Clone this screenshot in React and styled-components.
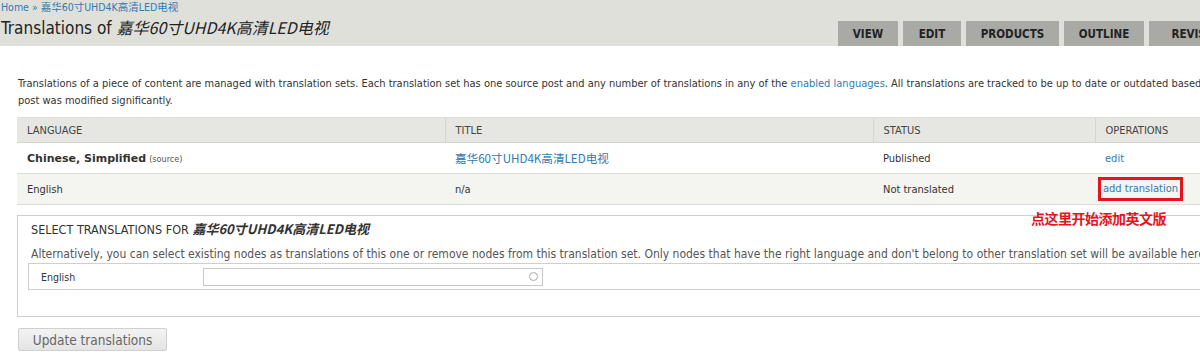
import React from "react";
import styled, { createGlobalStyle } from "styled-components";

const Global = createGlobalStyle`
  html, body { margin: 0; padding: 0; background: #fff; overflow: hidden; }
  body { font-family: "DejaVu Sans Condensed", "DejaVu Sans", "Noto Sans CJK SC", sans-serif; font-stretch: condensed; color: #333; }
`;

const Page = styled.div`
  width: 1200px;
  height: 352px;
  overflow: hidden;
  position: relative;
`;

const Header = styled.header`
  background: #e0e0db;
  height: 46px;
  padding: 1px 0 0 1px;
  box-sizing: border-box;
  display: flex;
  flex-direction: column;
  overflow: hidden;
`;

const Breadcrumb = styled.div`
  font-size: 10.5px;
  line-height: 12px;
  color: #2f7bb3;
  white-space: nowrap;
`;

const TitleRow = styled.div`
  display: flex;
  align-items: flex-end;
  justify-content: space-between;
  flex: 1;
  width: 1256px;
`;

const Title = styled.h1`
  margin: 0 0 7px 0;
  font-size: 17px;
  font-weight: normal;
  color: #222;
  white-space: nowrap;
  em { font-family: "Noto Sans CJK SC", "DejaVu Sans", sans-serif; font-style: italic; font-size: 16px; }
`;

const Tabs = styled.nav`
  display: flex;
  gap: 5px;
`;

const Tab = styled.span`
  display: flex;
  align-items: center;
  justify-content: center;
  width: ${(p) => p.$w}px;
  height: 25px;
  background: #a9a9a5;
  color: #222;
  font-weight: bold;
  font-size: 11.5px;
  flex-shrink: 0;
`;

const Content = styled.main`
  width: 1280px;
  padding: 0 0 0 17px;
  display: flex;
  flex-direction: column;
  align-items: flex-start;
`;

const Intro = styled.p`
  margin: 29px 0 8px 1px;
  font-size: 11px;
  line-height: 17px;
  color: #333;
  white-space: nowrap;
  a { color: #2f7bb3; text-decoration: none; }
`;

const Table = styled.table`
  border-collapse: collapse;
  width: 1260px;
  font-size: 11px;
  th, td { text-align: left; padding: 0 10px; }
  th {
    background: #e6e6e2;
    height: 24px;
    font-weight: normal;
    font-size: 11px;
    color: #444;
    text-transform: uppercase;
    border-left: 1px solid #d4d4d0;
    border-top: 1px solid #dededa;
    border-bottom: 1px solid #d4d4d0;
  }
  th:first-child { border-left: none; }
  td { height: 30px; color: #333; }
  tbody tr { border-bottom: 1px solid #dcdcd8; }
  tbody tr:nth-child(2) { background: #f4f4f1; }
`;

const Cell = styled.td`
  width: ${(p) => p.$w}px;
`;

const Strong = styled.b`
  font-family: "DejaVu Sans", sans-serif;
  font-stretch: normal;
  font-size: 11px;
`;

const Link = styled.a`
  color: #2f7bb3;
  text-decoration: none;
  font-size: ${(p) => (p.$big ? "11.6px" : "inherit")};
  font-family: ${(p) => (p.$cjk ? '"Noto Sans CJK SC", "DejaVu Sans", sans-serif' : "inherit")};
`;

const Source = styled.span`
  font-size: 9px;
  color: #555;
`;

const Highlight = styled.span`
  display: inline-block;
  border: 3px solid #e5141c;
  padding: 2px 2px 3px 2px;
  margin-left: -7px;
`;

const Annotation = styled.div`
  position: absolute;
  left: 1031px;
  top: 208px;
  color: #e5141c;
  font-family: "Noto Sans CJK SC", sans-serif;
  font-weight: bold;
  font-size: 14px;
  letter-spacing: -0.5px;
`;

const Fieldset = styled.section`
  margin-top: 10px;
  width: 1260px;
  height: 102px;
  box-sizing: border-box;
  border: 1px solid #cfcfcf;
  padding: 5px 0 0 13px;
`;

const Legend = styled.h2`
  margin: 0;
  font-size: 12.5px;
  line-height: 16px;
  font-weight: normal;
  text-transform: uppercase;
  color: #333;
  white-space: nowrap;
  em { font-family: "Noto Sans CJK SC", sans-serif; font-style: italic; font-weight: bold; font-size: 13px; }
`;

const FieldDesc = styled.p`
  margin: 9px 0 0 0;
  font-size: 12px;
  line-height: 15px;
  color: #555;
  white-space: nowrap;
`;

const FormRow = styled.div`
  margin: 1px 0 0 -3px;
  height: 27px;
  box-sizing: border-box;
  border: 1px solid #cfcfcf;
  display: flex;
  align-items: center;
  padding-left: 12px;
`;

const Label = styled.label`
  width: 162px;
  font-size: 10.5px;
  color: #333;
`;

const InputWrap = styled.div`
  width: 340px;
  height: 18px;
  box-sizing: border-box;
  border: 1px solid #c8c8c8;
  display: flex;
  align-items: center;
  justify-content: flex-end;
  padding-right: 4px;
`;

const Throbber = styled.span`
  width: 7px;
  height: 7px;
  border-radius: 50%;
  border: 1px solid #aaa;
`;

const Button = styled.button`
  margin-top: 11px;
  margin-left: 1px;
  width: 149px;
  height: 23px;
  border: 1px solid #d0d0d0;
  border-radius: 2px;
  background: linear-gradient(#f3f3f3, #e4e4e4);
  color: #666;
  font-family: "DejaVu Sans Condensed", "DejaVu Sans", sans-serif;
  font-stretch: condensed;
  font-size: 13.5px;
  padding: 0;
`;

const TITLE = "嘉华60寸UHD4K高清LED电视";

export default function App() {
  return (
    <>
      <Global />
      <Page>
        <Header>
          <Breadcrumb>Home » {TITLE}</Breadcrumb>
          <TitleRow>
            <Title>
              Translations of <em>{TITLE}</em>
            </Title>
            <Tabs>
              <Tab $w={60}>VIEW</Tab>
              <Tab $w={58}>EDIT</Tab>
              <Tab $w={93}>PRODUCTS</Tab>
              <Tab $w={80}>OUTLINE</Tab>
              <Tab $w={108}>REVISIONS</Tab>
            </Tabs>
          </TitleRow>
        </Header>
        <Content>
          <Intro>
            Translations of a piece of content are managed with translation sets. Each translation set has one source post and any number of translations in any of the{" "}
            <a href="#">enabled languages</a>. All translations are tracked to be up to date or outdated based on whether the source
            <br />
            post was modified significantly.
          </Intro>
          <Table>
            <thead>
              <tr>
                <th>Language</th>
                <th>Title</th>
                <th>Status</th>
                <th>Operations</th>
              </tr>
            </thead>
            <tbody>
              <tr>
                <Cell $w={408}>
                  <Strong>Chinese, Simplified</Strong> <Source>(source)</Source>
                </Cell>
                <Cell $w={408}>
                  <Link href="#" $cjk $big>{TITLE}</Link>
                </Cell>
                <Cell $w={202}>Published</Cell>
                <Cell>
                  <Link href="#">edit</Link>
                </Cell>
              </tr>
              <tr>
                <Cell $w={408}>English</Cell>
                <Cell $w={408}>n/a</Cell>
                <Cell $w={202}>Not translated</Cell>
                <Cell>
                  <Highlight>
                    <Link href="#">add translation</Link>
                  </Highlight>
                </Cell>
              </tr>
            </tbody>
          </Table>
          <Fieldset>
            <Legend>
              Select translations for <em>{TITLE}</em>
            </Legend>
            <FieldDesc>
              Alternatively, you can select existing nodes as translations of this one or remove nodes from this translation set. Only nodes that have the right language and don't belong to other translation set will be available here.
            </FieldDesc>
            <FormRow>
              <Label>English</Label>
              <InputWrap>
                <Throbber />
              </InputWrap>
            </FormRow>
          </Fieldset>
          <Button>Update translations</Button>
        </Content>
        <Annotation>点这里开始添加英文版</Annotation>
      </Page>
    </>
  );
}
